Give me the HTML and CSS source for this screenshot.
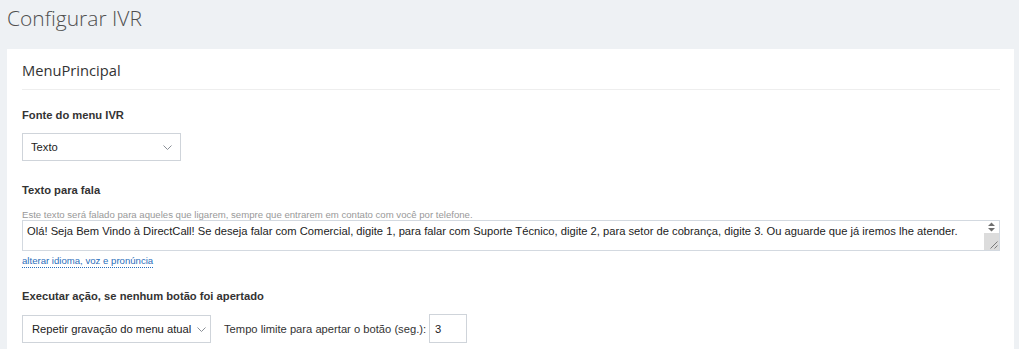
FILE: index.html
```html
<!DOCTYPE html>
<html lang="pt-br">
<head>
    <meta charset="UTF-8">
    <meta name="viewport" content="width=device-width, initial-scale=1.0">
    <title>Configurar IVR</title>
    <link rel="stylesheet" href="styles.css">
</head>
<body>
    <h1 class="page-title">Configurar IVR</h1>

    <main class="panel">
        <div class="panel-header">MenuPrincipal</div>

        <div class="panel-body">
            <div class="field">
                <label class="field-label" for="fonte">Fonte do menu IVR</label>
                <div class="select-wrap select-fonte">
                    <select id="fonte" class="select">
                        <option>Texto</option>
                        <option>Gravação</option>
                    </select>
                    <svg class="chevron" width="9" height="5" viewBox="0 0 9 5"><path d="M0.5 0.5 L4.5 4.5 L8.5 0.5" fill="none" stroke="#8a8f96" stroke-width="1"/></svg>
                </div>
            </div>

            <div class="field field-fala">
                <label class="field-label" for="fala">Texto para fala</label>
                <p class="help">Este texto será falado para aqueles que ligarem, sempre que entrarem em contato com você por telefone.</p>
                <div class="textarea-wrap">
                    <textarea id="fala" class="textarea">Olá! Seja Bem Vindo à DirectCall! Se deseja falar com Comercial, digite 1, para falar com Suporte Técnico, digite 2, para setor de cobrança, digite 3. Ou aguarde que já iremos lhe atender.</textarea>
                    <!-- barra de rolagem desenhada por cima -->
                    <div class="fake-scroll">
                        <div class="scroll-arrows">
                            <svg width="9" height="10" viewBox="0 0 9 10"><path d="M4.5 0.5 L8 4 L1 4 Z M1 6 L8 6 L4.5 9.5 Z" fill="#6f6f6f"/></svg>
                        </div>
                        <div class="scroll-grip">
                            <svg width="10" height="10" viewBox="0 0 10 10"><path d="M9.5 2.5 L2.5 9.5 M9.5 6.5 L6.5 9.5" stroke="#7a7a7a" stroke-width="1"/></svg>
                        </div>
                    </div>
                </div>
                <a href="#" class="link">alterar idioma, voz e pronúncia</a>
            </div>

            <div class="field field-acao">
                <label class="field-label" for="acao">Executar ação, se nenhum botão foi apertado</label>
                <div class="row">
                    <div class="select-wrap select-acao">
                        <select id="acao" class="select">
                            <option>Repetir gravação do menu atual</option>
                            <option>Desligar</option>
                        </select>
                        <svg class="chevron" width="9" height="5" viewBox="0 0 9 5"><path d="M0.5 0.5 L4.5 4.5 L8.5 0.5" fill="none" stroke="#8a8f96" stroke-width="1"/></svg>
                    </div>
                    <label class="inline-label" for="tempo">Tempo limite para apertar o botão (seg.):</label>
                    <input id="tempo" class="input-small" type="text" value="3">
                </div>
            </div>
        </div>
    </main>
</body>
</html>
```

FILE: styles.css
```css
* {
    box-sizing: border-box;
    margin: 0;
    padding: 0;
}

body {
    background-color: #eef1f4;
    font-family: "Liberation Sans", Arial, sans-serif;
    font-size: 11.2px;
    color: #333;
}

.page-title {
    font-family: "Open Sans", sans-serif;
    font-weight: 300;
    font-size: 21px;
    line-height: 30px;
    color: #4f4f4f;
    padding: 3px 7px 0;
    margin-bottom: 16px;
}

.panel {
    background-color: #fff;
    margin: 0 5px 0 7px;
    padding: 0 14px 0 15px;
    height: 300px;
}

.panel-header {
    font-family: "Open Sans", sans-serif;
    font-size: 14.7px;
    line-height: 38px;
    padding-top: 2px;
    color: #333;
    border-bottom: 1px solid #eeeeee;
}

.panel-body {
    padding-top: 18px;
}

.field-label {
    display: block;
    font-weight: bold;
    line-height: 15px;
    margin-bottom: 10px;
}

.field-fala {
    margin-top: 22px;
}

.field-fala .field-label {
    margin-bottom: 11px;
}

.help {
    font-size: 9.6px;
    line-height: 12px;
    color: #999;
}

.textarea-wrap {
    position: relative;
    margin-top: -1px;
}

.textarea {
    display: block;
    width: 100%;
    height: 31px;
    padding: 3px 20px 3px 4px;
    font-family: "Liberation Sans", Arial, sans-serif;
    font-size: 11.2px;
    line-height: 15px;
    color: #222;
    border: 1px solid #d3d9e0;
    overflow: hidden;
    resize: none;
}

.fake-scroll {
    position: absolute;
    top: 1px;
    right: 1px;
    bottom: 1px;
    width: 15px;
    display: flex;
    flex-direction: column;
}

.scroll-arrows {
    height: 12px;
    display: flex;
    justify-content: center;
    align-items: center;
    background-color: #fff;
}

.scroll-grip {
    flex: 1;
    display: flex;
    justify-content: flex-end;
    align-items: flex-end;
    padding: 0 1px 1px 0;
    background-color: #dcdcdc;
}

.link {
    display: inline-block;
    margin-top: 4px;
    font-size: 9.6px;
    line-height: 12px;
    color: #2a6ebb;
    text-decoration: none;
    border-bottom: 1px dotted #2a6ebb;
}

.field-acao {
    margin-top: 21px;
}

.row {
    display: flex;
    align-items: center;
}

.select-wrap {
    position: relative;
    height: 28px;
}

.select-fonte {
    width: 159px;
}

.select-acao {
    width: 189px;
}

.select {
    appearance: none;
    width: 100%;
    height: 100%;
    padding: 0 0 0 8px;
    font-family: "Liberation Sans", Arial, sans-serif;
    font-size: 11.2px;
    color: #222;
    background-color: #fff;
    border: 1px solid #cfd4da;
    border-radius: 0;
}

.select-acao .select {
    padding-left: 9px;
}

.chevron {
    position: absolute;
    right: 9px;
    top: 12px;
    pointer-events: none;
}

.select-acao .chevron {
    right: 5px;
}

.inline-label {
    margin-left: 13px;
    margin-right: 3px;
}

.input-small {
    width: 38px;
    height: 29px;
    padding-left: 5px;
    font-family: "Liberation Sans", Arial, sans-serif;
    font-size: 11.2px;
    color: #222;
    border: 1px solid #cfd4da;
}
```
